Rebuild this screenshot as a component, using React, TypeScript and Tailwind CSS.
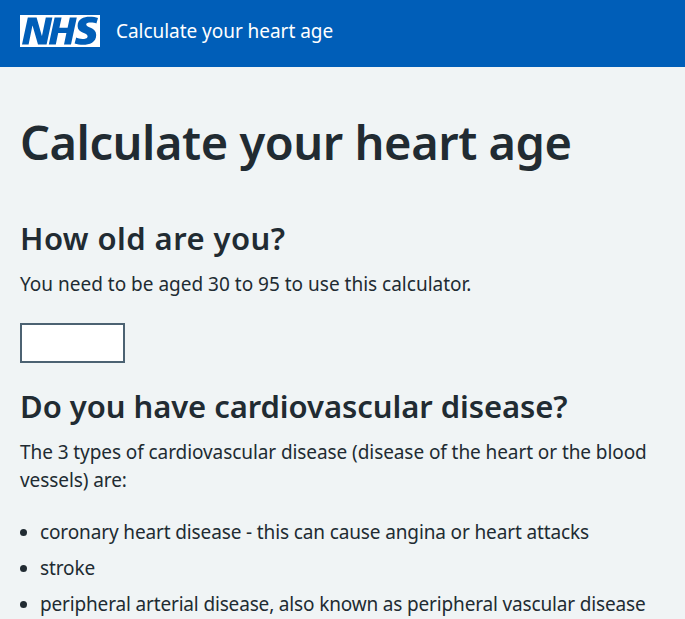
import React from 'react';

function NhsLogo() {
	return (
		<svg className="h-8 w-20 shrink-0" viewBox="0 0 40 16" aria-label="NHS">
			<path fill="#fff" d="M0 0h40v16H0z" />
			<path
				fill="#005eb8"
				d="M3.9 1.2h4.4l2.6 9.2h.1l1.9-9.2h3.3l-2.9 13.6h-4.3l-2.7-9.4h-.1l-1.9 9.4H1M17.3 1.2h3.5l-1.1 5.2h4.1l1.1-5.2h3.5l-2.9 13.6h-3.5l1.2-5.8h-4.1l-1.2 5.8h-3.5M38.2 4.2c-.7-.3-1.7-.5-2.8-.5-1.4 0-2.3.2-2.3 1.1 0 1.7 5 1.2 5 5.2 0 3.7-3.3 4.9-6.6 4.9-1.4 0-3-.3-4.2-.7l.8-2.9c.7.4 2 .7 3.1.7s2.6-.2 2.6-1.4c0-2-5-1.3-5-5.1 0-3.5 3-4.6 6-4.6 1.6 0 3.2.2 4.2.6"
			/>
		</svg>
	);
}

export default function App() {
	return (
		<div className="min-h-screen overflow-hidden bg-[#f0f4f5] font-['Noto_Sans',sans-serif] text-[#212b32]">
			<header className="flex h-[67px] items-start gap-4 bg-[#005eb8] px-5 pt-[15px]">
				<NhsLogo />
				<span className="mt-px text-[19px] leading-[30px] tracking-[-0.04px] text-white">Calculate your heart age</span>
			</header>
			<main className="px-5">
				<h1 className="mt-[45px] text-[47px] leading-[60px] font-semibold tracking-[-0.45px]">Calculate your heart age</h1>
				<h2 className="mt-[46px] text-[31px] leading-10 font-semibold tracking-[0.44px]">How old are you?</h2>
				<p className="mt-3 text-[19px] leading-7">You need to be aged 30 to 95 to use this calculator.</p>
				<input className="mt-[25px] block h-10 w-[105px] border-2 border-[#4c6272] bg-white" />
				<h2 className="mt-[23px] text-[31px] leading-10 font-semibold tracking-[-0.06px]">Do you have cardiovascular disease?</h2>
				<p className="mt-3 text-[19px] leading-7 tracking-[-0.08px]">
					The 3 types of cardiovascular disease (disease of the heart or the blood vessels) are:
				</p>
				<ul className="mt-6 list-disc pl-5 text-[19px] leading-7 tracking-[-0.13px]">
					<li className="mb-2">coronary heart disease - this can cause angina or heart attacks</li>
					<li className="mb-2">stroke</li>
					<li className="mb-2 tracking-[-0.16px]">peripheral arterial disease, also known as peripheral vascular disease</li>
				</ul>
			</main>
		</div>
	);
}
